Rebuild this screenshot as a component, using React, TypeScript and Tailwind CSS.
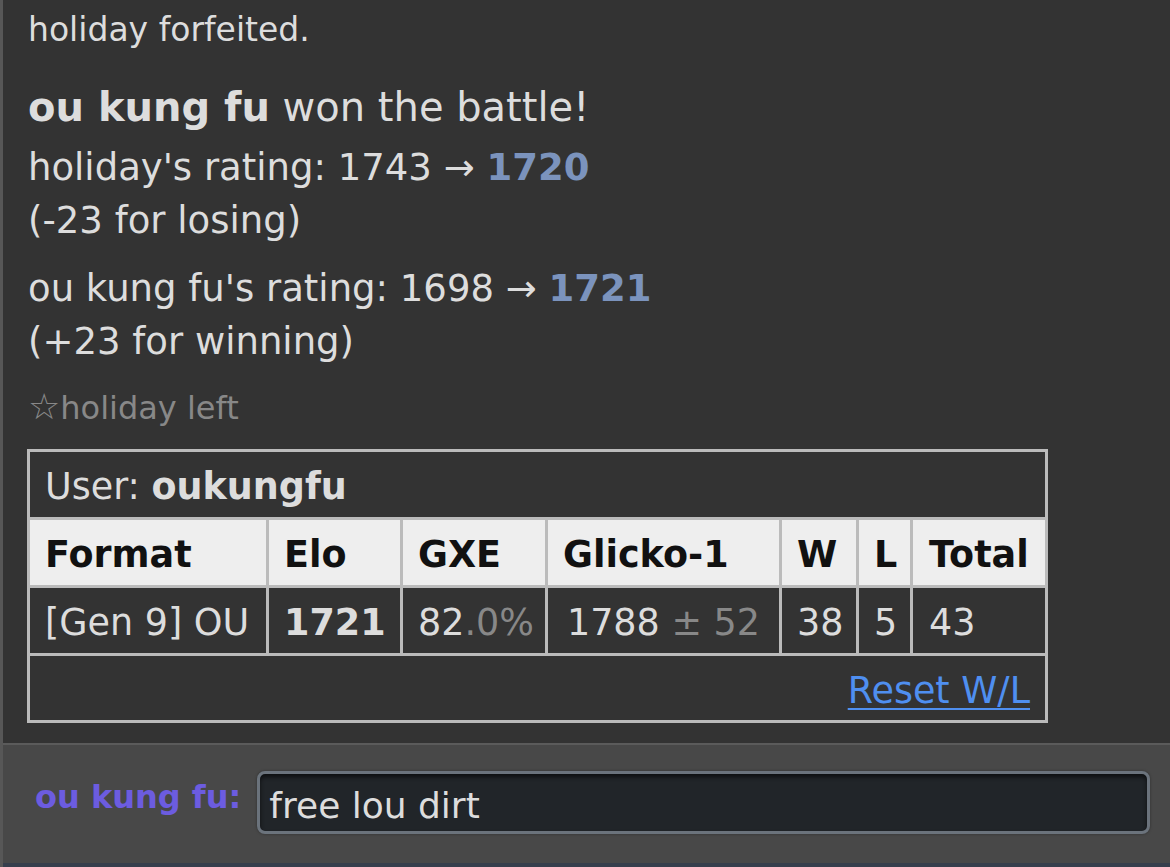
import React from 'react';

const font = { fontFamily: '"DejaVu Sans", Verdana, sans-serif' };

interface LadderRow {
    format: string;
    elo: number;
    gxe: string;
    glicko: number;
    deviation: number;
    w: number;
    l: number;
    total: number;
}

const row: LadderRow = {
    format: '[Gen 9] OU',
    elo: 1721,
    gxe: '82',
    glicko: 1788,
    deviation: 52,
    w: 38,
    l: 5,
    total: 43,
};

export default function App() {
    return (
        <div className="h-screen w-full flex flex-col bg-[#333] border-l-[3px] border-[#575757] overflow-hidden text-[#ddd]" style={font}>
            {/* Battle log */}
            <div className="h-[743px] shrink-0 pl-[25px] pt-[3px]">
                <div className="text-[33px] leading-[53px]">holiday forfeited.</div>

                <div className="mt-[22px] text-[40px] leading-[58px]">
                    <strong className="font-bold">ou kung fu</strong> won the battle!
                </div>

                <div className="mt-[5px] text-[37px] leading-[53px]">
                    holiday's rating: 1743 &rarr; <strong className="font-bold text-[#7b93bd]">1720</strong>
                    <br />
                    (-23 for losing)
                </div>

                <div className="mt-[15px] text-[37px] leading-[53px]">
                    ou kung fu's rating: 1698 &rarr; <strong className="font-bold text-[#7b93bd]">1721</strong>
                    <br />
                    (+23 for winning)
                </div>

                <div className="mt-[16px] text-[32px] leading-[48px] text-[#888]">
                    <span className="text-[36px] leading-none">&#9734;</span>holiday left
                </div>

                {/* Ladder infobox */}
                <div className="mt-[17px] -ml-px w-[1021px] border-[3px] border-[#bbb] text-[36.5px]">
                    <div className="h-[68px] flex items-center px-[15px] pt-[6px] border-b-[3px] border-[#bbb]">
                        User:&nbsp;<strong className="font-bold">oukungfu</strong>
                    </div>

                    <div className="grid grid-cols-[239px_134px_145px_234px_77px_54px_132px] h-[68px] border-b-[3px] border-[#bbb] bg-[#eee] text-[#111] font-bold">
                        <div className="flex items-center px-[15px] pt-[5px] border-r-[3px] border-[#bbb]">Format</div>
                        <div className="flex items-center px-[15px] pt-[5px] border-r-[3px] border-[#bbb]">Elo</div>
                        <div className="flex items-center px-[15px] pt-[5px] border-r-[3px] border-[#bbb]">GXE</div>
                        <div className="flex items-center px-[15px] pt-[5px] border-r-[3px] border-[#bbb]">Glicko-1</div>
                        <div className="flex items-center px-[15px] pt-[5px] border-r-[3px] border-[#bbb]">W</div>
                        <div className="flex items-center px-[15px] pt-[5px] border-r-[3px] border-[#bbb]">L</div>
                        <div className="flex items-center px-[16px] pt-[5px]">Total</div>
                    </div>

                    <div className="grid grid-cols-[239px_134px_145px_234px_77px_54px_132px] h-[68px] border-b-[3px] border-[#bbb] text-[#ddd]">
                        <div className="flex items-center px-[15px] pt-[6px] border-r-[3px] border-[#bbb] whitespace-nowrap">{row.format}</div>
                        <div className="flex items-center px-[15px] pt-[6px] border-r-[3px] border-[#bbb] font-bold">{row.elo}</div>
                        <div className="flex items-center px-[15px] pt-[6px] border-r-[3px] border-[#bbb]">
                            {row.gxe}<span className="text-[#888]">.0%</span>
                        </div>
                        <div className="flex items-center justify-center px-[15px] pt-[6px] border-r-[3px] border-[#bbb] whitespace-nowrap">
                            {row.glicko}&nbsp;<span className="text-[#888]">&plusmn; {row.deviation}</span>
                        </div>
                        <div className="flex items-center px-[15px] pt-[6px] border-r-[3px] border-[#bbb]">{row.w}</div>
                        <div className="flex items-center px-[15px] pt-[6px] border-r-[3px] border-[#bbb]">{row.l}</div>
                        <div className="flex items-center px-[16px] pt-[6px]">{row.total}</div>
                    </div>

                    <div className="h-[64px] flex items-center justify-end px-[15px] pt-[6px]">
                        <a href="#" className="text-[#4f8ff0] underline underline-offset-[5px] decoration-[2px]">Reset W/L</a>
                    </div>
                </div>
            </div>

            <div className="h-[2px] shrink-0 bg-[#5b5b5b]" />

            {/* Chat bar */}
            <div className="h-[118px] shrink-0 bg-[#484848] flex items-start pl-[32px] pr-[20px] pt-[26px]">
                <strong className="mt-[6px] text-[32px] leading-[40px] font-bold text-[#6c5ce0] whitespace-nowrap">ou kung fu:</strong>
                <input
                    type="text"
                    defaultValue="free lou dirt"
                    className="ml-[16px] flex-1 h-[63px] px-[9px] pt-[6px] border-[3px] border-[#6b737c] rounded-[8px] bg-[#212529] text-[36px] text-[#ddd] outline-none shadow-[inset_0_3px_4px_rgba(0,0,0,0.6),0_0_3px_rgba(0,0,0,0.35)]"
                    style={font}
                />
            </div>

            <div className="flex-1 bg-[#363e4c]" />
        </div>
    );
}
